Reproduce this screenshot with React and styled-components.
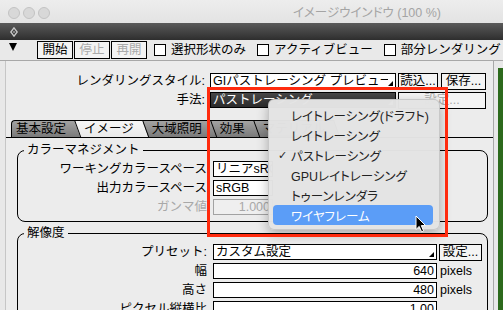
import React from "react";
import styled, { createGlobalStyle } from "styled-components";

const GlobalStyle = createGlobalStyle`
  html, body { margin: 0; padding: 0; background: #e8e8e8; overflow: hidden; }
  body {
    font-family: "Liberation Sans", "Noto Sans CJK JP", sans-serif;
    font-size: 12.5px;
    color: #000;
  }
  * { box-sizing: border-box; }
`;

const Window = styled.div`
  position: relative;
  width: 503px;
  height: 310px;
  overflow: hidden;
  background: #e8e8e8;
  display: flex;
  flex-direction: column;
`;

const TitleBar = styled.div`
  flex: none;
  height: 23px;
  display: flex;
  align-items: center;
  padding: 3px 0 0 8px;
  background: linear-gradient(#ededed, #e3e3e3);
`;

const Lights = styled.div`
  display: flex;
  gap: 3px;
`;

const Light = styled.span`
  width: 12px;
  height: 12px;
  border-radius: 50%;
  background: #d8d8d8;
  border: 1px solid #c3c3c3;
`;

const Title = styled.div`
  margin-left: 243px;
  color: #a4a4a4;
  font-size: 12.5px;
  font-feature-settings: "palt";
  white-space: nowrap;
  line-height: 16px;
`;

const DarkBar = styled.div`
  flex: none;
  height: 17px;
  display: flex;
  align-items: center;
  padding-left: 10px;
  background: linear-gradient(#5a5a5a, #2e2e2e);
`;

const Toolbar = styled.div`
  flex: none;
  height: 21px;
  display: flex;
  align-items: center;
  padding-left: 9px;
  border-bottom: 1px solid #a8a8a8;
  background: #e9e9e9;
`;

const Disclosure = styled.span`
  align-self: flex-start;
  margin-top: 3px;
  width: 0;
  height: 0;
  border-left: 4.5px solid transparent;
  border-right: 4.5px solid transparent;
  border-top: 8px solid #000;
  margin-right: 20px;
`;

const ToolButtons = styled.div`
  display: flex;
  gap: 1px;
`;

const ToolButton = styled.div`
  width: 36px;
  height: 18px;
  border: 1px solid #000;
  background: #f3f3f3;
  display: flex;
  align-items: center;
  justify-content: center;
  line-height: 16px;
  color: ${(p) => (p.$disabled ? "#aaaaaa" : "#000")};
`;

const CheckItem = styled.label`
  display: flex;
  align-items: center;
  margin-left: ${(p) => p.$ml}px;
  white-space: nowrap;
  line-height: 16px;
`;

const CheckBox = styled.span`
  width: 12px;
  height: 12px;
  border: 1px solid #000;
  background: #fff;
  margin-right: 5px;
  flex: none;
`;

const Body = styled.div`
  flex: 1;
  display: flex;
  min-height: 0;
`;

const Panel = styled.div`
  width: 489px;
  margin-left: 5px;
  border-left: 1px solid #c6c6c6;
  border-right: 1px solid #a8a8a8;
  background: #ececec;
  padding-top: 12px;
  display: flex;
  flex-direction: column;
`;

const GreenStrip = styled.div`
  flex: 1;
  margin: 7px 0 0 4px;
  background: #2d6a1c;
`;

const FormRow = styled.div`
  display: flex;
  align-items: center;
  height: 16px;
  & + & {
    margin-top: 3px;
  }
`;

const FormLabel = styled.div`
  width: ${(p) => p.$w}px;
  flex: none;
  text-align: right;
  white-space: nowrap;
  line-height: 16px;
  color: ${(p) => (p.$disabled ? "#a8a8a8" : "#000")};
`;

const Popup = styled.div`
  display: flex;
  align-items: center;
  flex: none;
  width: ${(p) => p.$w}px;
  height: 16px;
  margin-left: ${(p) => p.$ml}px;
  border: 1px solid #000;
  background: ${(p) => (p.$dark ? "linear-gradient(#474747, #2b2b2b)" : "#fff")};
  color: ${(p) => (p.$dark ? "#fff" : "#000")};
  padding: 0 2px 0 2px;
  overflow: hidden;
`;

const PopupText = styled.span`
  flex: 1;
  overflow: hidden;
  white-space: nowrap;
  line-height: 14px;
`;

const PopupArrow = styled.span`
  flex: none;
  align-self: flex-end;
  margin-bottom: 2px;
  width: 0;
  height: 0;
  border-left: 5px solid transparent;
  border-bottom: 5px solid currentColor;
`;

const Button = styled.div`
  flex: none;
  width: ${(p) => p.$w}px;
  height: 17px;
  margin-left: ${(p) => p.$ml}px;
  border: 1px solid #000;
  background: #f4f4f4;
  display: flex;
  align-items: center;
  justify-content: center;
  white-space: nowrap;
  line-height: 15px;
  color: ${(p) => (p.$disabled ? "#a9a9a9" : "#000")};
`;

const TabStrip = styled.div`
  display: flex;
  height: 17px;
  margin-top: 12px;
  padding-left: 5px;
`;

const Tab = styled.div`
  position: relative;
  z-index: ${(p) => p.$z};
  height: 17px;
  padding: 0 9px 0 ${(p) => (p.$first ? 4 : 9)}px;
  border-top: 1px solid #000;
  border-left: ${(p) => (p.$first ? "1px solid #000" : "none")};
  border-top-left-radius: ${(p) => (p.$first ? 4 : 0)}px;
  background: ${(p) =>
    p.$active ? "linear-gradient(#f6f6f6, #e9e9e9)" : "linear-gradient(#a3a3a3, #7a7a7a)"};
  line-height: 16px;
  white-space: nowrap;
  color: #000;
  &::after {
    content: "";
    position: absolute;
    z-index: -1;
    top: -1px;
    bottom: 0;
    right: 0;
    width: 9px;
    background: inherit;
    border-top: 1px solid #000;
    border-right: 1px solid #000;
    transform: skewX(20deg);
    transform-origin: top left;
  }
`;

const TabPage = styled.div`
  border-top: 1px solid #000;
  padding-top: 3px;
  display: flex;
  flex-direction: column;
`;

const Group = styled.fieldset`
  margin: ${(p) => p.$mt}px 5px 0 11px;
  padding: 2px 0 6px 0;
  border: 1px solid #000;
  border-radius: 8px;
  min-width: 0;
`;

const Legend = styled.legend`
  margin-left: 6px;
  padding: 0 3px;
  line-height: 18px;
`;

const Field = styled.div`
  flex: none;
  width: ${(p) => p.$w}px;
  height: 16px;
  margin-left: 6px;
  border: 1px solid ${(p) => (p.$disabled ? "#a2a2a2" : "#000")};
  background: ${(p) => (p.$disabled ? "#efefef" : "#fff")};
  color: ${(p) => (p.$disabled ? "#a8a8a8" : "#000")};
  text-align: ${(p) => p.$align || "left"};
  padding: 0 2px;
  line-height: 14px;
  overflow: hidden;
  white-space: nowrap;
`;

const Unit = styled.span`
  margin-left: 3px;
  line-height: 16px;
`;

const Menu = styled.div`
  position: absolute;
  left: 268px;
  top: 99px;
  width: 172px;
  height: 131px;
  padding-top: 5px;
  border-radius: 6px;
  background: rgba(227, 227, 227, 0.98);
  border: 1px solid rgba(0, 0, 0, 0.12);
  box-shadow: 0 4px 12px rgba(0, 0, 0, 0.28);
  font-size: 12.5px;
  font-feature-settings: "palt";
  z-index: 20;
`;

const MenuItem = styled.div`
  display: flex;
  align-items: center;
  height: 20px;
  margin: 0 6px 0 4px;
  padding-left: 5px;
  border-radius: 4px;
  white-space: nowrap;
  background: ${(p) => (p.$hl ? "#5b9df7" : "transparent")};
  color: ${(p) => (p.$hl ? "#fff" : "#222")};
`;

const Check = styled.span`
  width: 13px;
  flex: none;
  font-family: "DejaVu Sans", sans-serif;
  font-size: 11px;
`;

const RedFrame = styled.div`
  position: absolute;
  left: 207px;
  top: 87px;
  width: 241px;
  height: 150px;
  border: 3px solid #ff2b0e;
  z-index: 30;
`;

const Cursor = styled.svg`
  position: absolute;
  left: 415px;
  top: 215px;
  z-index: 25;
`;

const menuItems = [
  { label: "レイトレーシング(ドラフト)" },
  { label: "レイトレーシング" },
  { label: "パストレーシング", checked: true },
  { label: "GPUレイトレーシング" },
  { label: "トゥーンレンダラ" },
  { label: "ワイヤフレーム", hl: true },
];

const tabs = ["基本設定", "イメージ", "大域照明", "効果", "マテリアル"];

export default function App() {
  return (
    <>
      <GlobalStyle />
      <Window>
        <TitleBar>
          <Lights>
            <Light />
            <Light />
            <Light />
          </Lights>
          <Title>イメージウインドウ (100 %)</Title>
        </TitleBar>
        <DarkBar>
          <svg width="8" height="10" viewBox="0 0 8 10">
            <polygon points="4,0.8 7.2,5 4,9.2 0.8,5" fill="none" stroke="#c9c9c9" strokeWidth="1.3" />
            <circle cx="4" cy="5" r="1" fill="#9a9a9a" />
          </svg>
        </DarkBar>
        <Toolbar>
          <Disclosure />
          <ToolButtons>
            <ToolButton>開始</ToolButton>
            <ToolButton $disabled>停止</ToolButton>
            <ToolButton $disabled>再開</ToolButton>
          </ToolButtons>
          <CheckItem $ml={7}>
            <CheckBox />
            選択形状のみ
          </CheckItem>
          <CheckItem $ml={11}>
            <CheckBox />
            アクティブビュー
          </CheckItem>
          <CheckItem $ml={11}>
            <CheckBox />
            部分レンダリング
          </CheckItem>
        </Toolbar>
        <Body>
          <Panel>
            <FormRow>
              <FormLabel $w={199}>レンダリングスタイル:</FormLabel>
              <Popup $w={186} $ml={5}>
                <PopupText>GIパストレーシング プレビュー</PopupText>
                <PopupArrow />
              </Popup>
              <Button $w={40} $ml={2}>読込...</Button>
              <Button $w={45} $ml={3}>保存...</Button>
            </FormRow>
            <FormRow>
              <FormLabel $w={199}>手法:</FormLabel>
              <Popup $w={186} $ml={5} $dark>
                <PopupText>パストレーシング</PopupText>
                <PopupArrow />
              </Popup>
              <Button $w={88} $ml={2} $disabled>設定...</Button>
            </FormRow>

            <TabStrip>
              {tabs.map((t, i) => (
                <Tab key={t} $first={i === 0} $active={i === 1} $z={10 - i}>
                  {t}
                </Tab>
              ))}
            </TabStrip>
            <TabPage>
              <Group $mt={0}>
                <Legend>カラーマネジメント</Legend>
                <FormRow>
                  <FormLabel $w={189}>ワーキングカラースペース</FormLabel>
                  <Field $w={60}>リニアsRGB</Field>
                </FormRow>
                <FormRow>
                  <FormLabel $w={189}>出力カラースペース</FormLabel>
                  <Field $w={60}>sRGB</Field>
                </FormRow>
                <FormRow>
                  <FormLabel $w={189} $disabled>ガンマ値</FormLabel>
                  <Field $w={60} $disabled $align="right">1.000</Field>
                </FormRow>
              </Group>
              <Group $mt={2}>
                <Legend>解像度</Legend>
                <FormRow>
                  <FormLabel $w={189}>プリセット:</FormLabel>
                  <Popup $w={224} $ml={6}>
                    <PopupText>カスタム設定</PopupText>
                    <PopupArrow />
                  </Popup>
                  <Button $w={43} $ml={2}>設定...</Button>
                </FormRow>
                <FormRow>
                  <FormLabel $w={189}>幅</FormLabel>
                  <Field $w={224} $align="right">640</Field>
                  <Unit>pixels</Unit>
                </FormRow>
                <FormRow>
                  <FormLabel $w={189}>高さ</FormLabel>
                  <Field $w={224} $align="right">480</Field>
                  <Unit>pixels</Unit>
                </FormRow>
                <FormRow>
                  <FormLabel $w={189}>ピクセル縦横比</FormLabel>
                  <Field $w={224} $align="right">1.00</Field>
                </FormRow>
              </Group>
            </TabPage>
          </Panel>
          <GreenStrip />
        </Body>

        <Menu>
          {menuItems.map((m) => (
            <MenuItem key={m.label} $hl={m.hl}>
              <Check>{m.checked ? "✓" : ""}</Check>
              {m.label}
            </MenuItem>
          ))}
        </Menu>
        <Cursor width="12" height="18" viewBox="0 0 12 18">
          <path
            d="M1 1 L1 14.5 L4.2 11.4 L6.6 16.8 L8.6 15.9 L6.3 10.6 L10.6 10.6 Z"
            fill="#000"
            stroke="#fff"
            strokeWidth="1"
            strokeLinejoin="round"
          />
        </Cursor>
        <RedFrame />
      </Window>
    </>
  );
}
